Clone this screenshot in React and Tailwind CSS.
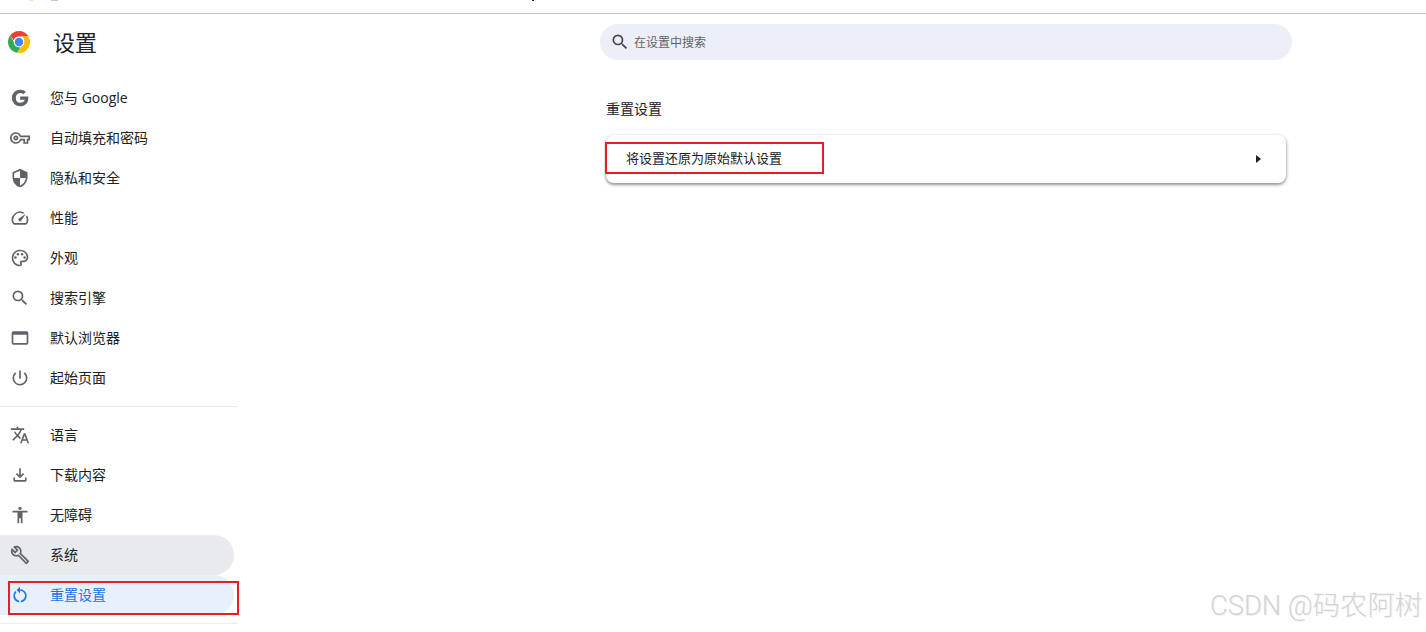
import React from 'react';
import {
  MdOutlineVpnKey, MdSecurity, MdOutlineSpeed, MdOutlinePalette, MdSearch,
  MdPowerSettingsNew, MdTranslate, MdOutlineFileDownload, MdAccessibility, MdOutlineBuild, MdRestartAlt,
} from 'react-icons/md';

const GoogleIcon = ({ className }) => (
  <svg viewBox="0 0 24 24" className={className} fill="currentColor">
    <path d="M12.2 10.2v3.9h5.5c-.7 2.3-2.7 3.700-5.500 3.700a6 6 0 0 1 0-11.900c1.500 0 2.900.5 4 1.500l2.900-2.900A10 10 0 0 0 12.200 2a10 10 0 1 0 0 20c5.800 0 9.800-4.100 9.800-9.800 0-.7-.1-1.400-.2-2z" />
  </svg>
);

const WindowIcon = ({ className }) => (
  <svg viewBox="0 0 24 24" className={className} fill="currentColor">
    <path d="M4 4h16a2 2 0 0 1 2 2v12a2 2 0 0 1-2 2H4a2 2 0 0 1-2-2V6a2 2 0 0 1 2-2zm0 4v10h16V8z" />
  </svg>
);

const ChromeLogo = () => (
  <svg viewBox="0 0 48 48" className="w-6 h-6">
    <path fill="#ea4335" d="M24 2a22 22 0 0 1 19 11H24a11 11 0 0 0-10.500 7.500L6.200 11A22 22 0 0 1 24 2z" />
    <path fill="#34a853" d="M6.200 11l9.500 16.500A11 11 0 0 0 27 34.600L20.500 45.700A22 22 0 0 1 6.200 11z" />
    <path fill="#fbbc04" d="M43 13a22 22 0 0 1-22 32.800l9.500-16.500A11 11 0 0 0 33 16l-2-3z" />
    <circle cx="24" cy="24" r="10.500" fill="#fff" />
    <circle cx="24" cy="24" r="8.500" fill="#4285f4" />
  </svg>
);

const topItems = [
  { label: '您与 Google', icon: GoogleIcon },
  { label: '自动填充和密码', icon: MdOutlineVpnKey },
  { label: '隐私和安全', icon: MdSecurity },
  { label: '性能', icon: MdOutlineSpeed },
  { label: '外观', icon: MdOutlinePalette },
  { label: '搜索引擎', icon: MdSearch },
  { label: '默认浏览器', icon: WindowIcon },
  { label: '起始页面', icon: MdPowerSettingsNew },
];

const bottomItems = [
  { label: '语言', icon: MdTranslate },
  { label: '下载内容', icon: MdOutlineFileDownload },
  { label: '无障碍', icon: MdAccessibility },
  { label: '系统', icon: MdOutlineBuild, state: 'hover' },
  { label: '重置设置', icon: MdRestartAlt, state: 'active' },
];

const NavItem = ({ item }) => {
  const Icon = item.icon;
  let tone = 'text-[#202124]';
  let iconTone = 'text-[#5f6368]';
  if (item.state === 'hover') tone = 'text-[#202124] bg-[#e8eaed]';
  if (item.state === 'active') {
    tone = 'text-[#1a73e8] bg-[#e8f0fe]';
    iconTone = 'text-[#1a73e8]';
  }
  return (
    <div className={`flex items-center h-10 w-[234px] rounded-r-[20px] text-sm ${tone}`}>
      <div className={`w-[50px] pl-2.5 shrink-0 ${iconTone}`}>
        <Icon className="w-5 h-5" />
      </div>
      <span>{item.label}</span>
    </div>
  );
};

export default function App() {
  return (
    <div
      className="relative h-[632px] w-full overflow-hidden bg-white"
      style={{ fontFamily: '"Open Sans", "Noto Sans CJK SC", sans-serif' }}
    >
      {/* Cut-off browser toolbar */}
      <div className="h-[14px] border-b border-[#c8c8c8] flex items-start">
        <span className="ml-[30px] w-[3px] h-px bg-[#fde293]" />
        <span className="ml-[18px] w-[7px] h-px bg-[#c5c5d8]" />
        <span className="ml-[474px] w-[2px] h-px bg-[#1a2a6c]" />
      </div>

      <div className="flex">
        {/* Sidebar */}
        <aside className="w-[237px] shrink-0">
          <div className="flex items-center h-[56px] pl-[7px]">
            <ChromeLogo />
            <h1 className="ml-[22px] text-[22px] font-normal text-[#202124]">设置</h1>
          </div>
          <nav className="mt-2">
            {topItems.map((item) => <NavItem key={item.label} item={item} />)}
            <div className="my-2 border-t border-[#e8eaed]" />
            {bottomItems.map((item) => <NavItem key={item.label} item={item} />)}
            <div className="mt-2 border-t border-[#e8eaed]" />
          </nav>
        </aside>

        {/* Main */}
        <main className="ml-[363px] w-[692px] pt-2.5">
          <div className="flex items-center h-9 rounded-[18px] bg-[#eceff7] pl-2.5">
            <MdSearch className="w-5 h-5 text-[#444746]" />
            <span className="ml-1 mt-0.5 text-xs text-[#5f6368]">在设置中搜索</span>
          </div>
          <h2 className="mt-[39px] ml-1.5 text-sm leading-5 font-normal text-[#202124]">重置设置</h2>
          <section className="mt-4 mx-1.5 h-12 rounded-lg bg-white shadow-[0_1px_3px_1px_rgba(60,64,67,0.2),0_2px_3px_rgba(60,64,67,0.4)] flex items-center justify-between pl-5 pr-[25px]">
            <span className="text-[13px] text-[#202124]">将设置还原为原始默认设置</span>
            <svg viewBox="0 0 5 8" className="w-[5px] h-2 fill-[#202124]">
              <path d="M0 0l5 4-5 4z" />
            </svg>
          </section>
        </main>
      </div>

      {/* Red annotation boxes */}
      <div className="absolute left-2 top-[581px] w-[231px] h-[34px] border-2 border-[#ed1c24]" />
      <div className="absolute left-[605px] top-[142px] w-[219px] h-8 border-2 border-[#ed1c24]" />

      {/* Watermark */}
      <div className="absolute right-[4px] top-[588px] text-[27.3px] leading-9 font-light text-[#d4d4d4] whitespace-nowrap [text-shadow:1px_1px_1px_rgba(0,0,0,0.06)] [font-family:Roboto,'Noto_Sans_CJK_SC',sans-serif]">
        CSDN @码农阿树
      </div>
    </div>
  );
}
